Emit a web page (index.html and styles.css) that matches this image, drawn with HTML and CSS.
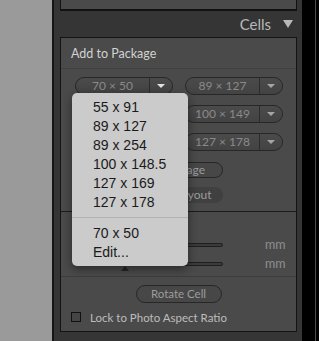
FILE: index.html
```html
<!DOCTYPE html>
<html lang="en">
<head>
  <meta charset="UTF-8">
  <meta name="viewport" content="width=device-width, initial-scale=1.0">
  <title>Cells</title>
  <link rel="stylesheet" href="styles.css">
</head>
<body>
  <div class="screen">
    <div class="desk"></div>

    <aside class="panel">
      <div class="prev-box"></div>
      <div class="panel-head">
        <span>Cells</span>
        <span class="head-arrow"></span>
      </div>

      <section class="box">
        <div class="box-title">Add to Package</div>

        <div class="sizes">
          <div class="pill pill-active"><span class="pill-value">70 &times; 50</span><span class="pill-arrow"></span></div>
          <div class="pill"><span class="pill-value">89 &times; 127</span><span class="pill-arrow"></span></div>
          <div class="pill"><span class="pill-value">89 &times; 254</span><span class="pill-arrow"></span></div>
          <div class="pill"><span class="pill-value">100 &times; 149</span><span class="pill-arrow"></span></div>
          <div class="pill"><span class="pill-value">127 &times; 169</span><span class="pill-arrow"></span></div>
          <div class="pill"><span class="pill-value">127 &times; 178</span><span class="pill-arrow"></span></div>
        </div>

        <div class="page-actions">
          <button class="btn">New Page</button>
          <button class="btn btn-flat">Clear Layout</button>
        </div>

        <div class="adjust">
          <div class="slider-row">
            <div class="track"><span class="thumb"></span></div>
            <span class="unit">mm</span>
          </div>
          <div class="slider-row">
            <div class="track"><span class="thumb"></span></div>
            <span class="unit">mm</span>
          </div>
        </div>

        <div class="rotate-row">
          <button class="btn btn-rotate">Rotate Cell</button>
        </div>

        <label class="check-row"><span class="check"></span>Lock to Photo Aspect Ratio</label>
      </section>
    </aside>

    <div class="rail"><span class="rail-line"></span></div>

    <div class="menu">
      <div class="menu-item">55 x 91</div>
      <div class="menu-item">89 x 127</div>
      <div class="menu-item">89 x 254</div>
      <div class="menu-item">100 x 148.5</div>
      <div class="menu-item">127 x 169</div>
      <div class="menu-item">127 x 178</div>
      <div class="menu-sep"></div>
      <div class="menu-item">70 x 50</div>
      <div class="menu-item">Edit...</div>
    </div>
  </div>
</body>
</html>
```

FILE: styles.css
```css
* {
  box-sizing: border-box;
}
body {
  margin: 0;
  background-color: #000;
  font-family: Lato, 'Open Sans', sans-serif;
}
.screen {
  position: relative;
  display: flex;
  width: 319px;
  height: 341px;
  overflow: hidden;
}
.desk {
  width: 52px;
  background-color: #9a9a9a;
}
.panel {
  width: 250px;
  padding: 0 5px 0 6px;
  border-left: 2px solid #161616;
  background-color: #353535;
}
.prev-box {
  height: 11px;
  border: 1px solid #121212;
  border-top: 0;
  border-bottom-width: 2px;
  background-color: #4a4a4a;
}
.panel-head {
  display: flex;
  align-items: center;
  justify-content: flex-end;
  gap: 12px;
  height: 26px;
  padding-right: 4px;
  font-size: 15px;
  color: #b9b9b9;
}
.head-arrow {
  width: 0;
  height: 0;
  border-left: 5px solid transparent;
  border-right: 5px solid transparent;
  border-top: 8px solid #b9b9b9;
}
.box {
  border: 1px solid #141414;
  background-color: #4a4a4a;
}
.box-title {
  display: flex;
  align-items: center;
  height: 31px;
  padding-left: 10px;
  font-size: 12.5px;
  color: #d2d2d2;
  border-bottom: 1px solid #414141;
}
.sizes {
  display: grid;
  grid-template-columns: 98px 98px;
  column-gap: 12px;
  row-gap: 10px;
  padding: 8px 0 0 14px;
}
.pill {
  display: flex;
  height: 18px;
  border: 1px solid #272727;
  border-radius: 9px;
  background: linear-gradient(#4b4b4b, #434343);
}
.pill-value {
  flex: 1;
  text-align: center;
  font-size: 12px;
  line-height: 16px;
  color: #8a8a8a;
  border-right: 1px solid #2c2c2c;
}
.pill-arrow {
  display: flex;
  align-items: center;
  justify-content: center;
  width: 22px;
}
.pill-arrow::before {
  content: '';
  border-left: 4px solid transparent;
  border-right: 4px solid transparent;
  border-top: 4px solid #a5a5a5;
}
.pill-active .pill-arrow::before {
  border-top-color: #e2e2e2;
}
.page-actions {
  display: flex;
  flex-direction: column;
  align-items: center;
  gap: 9px;
  padding: 11px 0 8px;
  border-bottom: 1px solid #1c1c1c;
}
.btn {
  width: 89px;
  height: 16px;
  padding: 0;
  border: 1px solid #272727;
  border-radius: 8px;
  background-color: #474747;
  font-family: Lato, 'Open Sans', sans-serif;
  font-size: 12px;
  line-height: 14px;
  color: #9c9c9c;
}
.btn-flat {
  border-color: transparent;
  background-color: #404040;
}
.adjust {
  padding: 23px 0 3px;
  border-bottom: 1px solid #3d3d3d;
}
.slider-row {
  display: flex;
  align-items: center;
  height: 19px;
  padding-left: 42px;
}
.track {
  position: relative;
  width: 120px;
  height: 4px;
  border: 1px solid #1f1f1f;
  border-radius: 2px;
  background-color: #3b3b3b;
}
.thumb {
  position: absolute;
  top: 3px;
  left: 17px;
  width: 0;
  height: 0;
  border-left: 4px solid transparent;
  border-right: 4px solid transparent;
  border-bottom: 5px solid #262626;
}
.unit {
  margin-left: 42px;
  font-size: 12.5px;
  color: #8f8f8f;
}
.rotate-row {
  display: flex;
  justify-content: center;
  padding-top: 8px;
}
.btn-rotate {
  width: 86px;
  height: 18px;
  border-radius: 9px;
  font-size: 11.5px;
  line-height: 16px;
}
.check-row {
  display: flex;
  align-items: center;
  gap: 9px;
  height: 14px;
  margin-top: 7px;
  margin-bottom: 7px;
  padding-left: 10px;
  font-size: 11.5px;
  color: #bdbdbd;
}
.check {
  width: 10px;
  height: 10px;
  border: 1px solid #111;
  background-color: #454545;
}
.rail {
  width: 17px;
  padding-left: 13px;
  background-color: #000;
}
.rail-line {
  display: block;
  width: 1px;
  height: 100%;
  background-color: #4b4b4b;
}
.menu {
  position: absolute;
  left: 72px;
  top: 93px;
  width: 116px;
  padding: 5px 0 4px;
  border-radius: 5px;
  background-color: #cbcbcb;
  box-shadow: 0 3px 10px rgba(0, 0, 0, 0.45);
  font-family: 'Liberation Sans', Arial, sans-serif;
  font-size: 14px;
  color: #1a1a1a;
}
.menu-item {
  height: 19px;
  line-height: 19px;
  padding-left: 21px;
}
.menu-sep {
  height: 1px;
  margin: 5px 0 6px;
  background-color: #b2b2b2;
}
```
